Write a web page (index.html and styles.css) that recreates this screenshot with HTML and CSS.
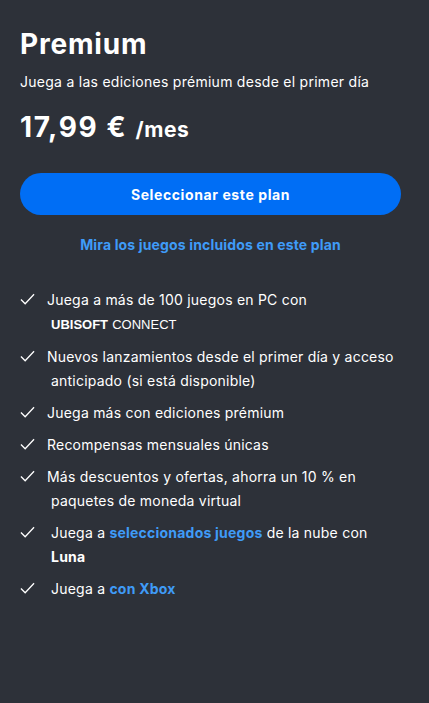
FILE: index.html
```html
<!DOCTYPE html>
<html lang="es">
<head>
    <meta charset="UTF-8">
    <meta name="viewport" content="width=device-width, initial-scale=1.0">
    <title>Premium</title>
    <link rel="stylesheet" href="styles.css">
</head>
<body>
    <div class="plan">
        <h1 class="plan-title">Premium</h1>
        <p class="plan-subtitle">Juega a las ediciones prémium desde el primer día</p>
        <p class="plan-price">17,99 € <span class="per">/mes</span></p>

        <button class="select-btn" type="button">Seleccionar este plan</button>
        <a class="games-link" href="#">Mira los juegos incluidos en este plan</a>

        <ul class="features">
            <li>
                <svg class="check" viewBox="0 0 16 12"><path d="M1 6.5 L5.5 11 L15 1"/></svg>
                <span>Juega a más de 100 juegos en PC con<br><span class="indent"><b class="ubi">UBISOFT</b> <span class="ubi-light">CONNECT</span></span></span>
            </li>
            <li>
                <svg class="check" viewBox="0 0 16 12"><path d="M1 6.5 L5.5 11 L15 1"/></svg>
                <span>Nuevos lanzamientos desde el primer día y acceso<br><span class="indent">anticipado (si está disponible)</span></span>
            </li>
            <li>
                <svg class="check" viewBox="0 0 16 12"><path d="M1 6.5 L5.5 11 L15 1"/></svg>
                <span>Juega más con ediciones prémium</span>
            </li>
            <li>
                <svg class="check" viewBox="0 0 16 12"><path d="M1 6.5 L5.5 11 L15 1"/></svg>
                <span>Recompensas mensuales únicas</span>
            </li>
            <li>
                <svg class="check" viewBox="0 0 16 12"><path d="M1 6.5 L5.5 11 L15 1"/></svg>
                <span>Más descuentos y ofertas, ahorra un 10 % en<br><span class="indent">paquetes de moneda virtual</span></span>
            </li>
            <li class="shifted">
                <svg class="check" viewBox="0 0 16 12"><path d="M1 6.5 L5.5 11 L15 1"/></svg>
                <span>Juega a <a href="#">seleccionados juegos</a> de la nube con<br><b>Luna</b></span>
            </li>
            <li class="shifted">
                <svg class="check" viewBox="0 0 16 12"><path d="M1 6.5 L5.5 11 L15 1"/></svg>
                <span>Juega a <a href="#">con Xbox</a></span>
            </li>
        </ul>
    </div>
</body>
</html>
```

FILE: styles.css
```css
body {
    margin: 0;
    background: #2d3139;
    color: #ffffff;
    font-family: 'Inter', 'Noto Sans', sans-serif;
}
.plan {
    padding: 26px 28px 40px 20px;
    display: flex;
    flex-direction: column;
}
.plan-title {
    margin: 0;
    font-size: 28px;
    font-weight: 700;
    line-height: 36px;
    letter-spacing: 0.8px;
}
.plan-subtitle {
    margin: 10px 0 0;
    font-size: 14px;
    line-height: 20px;
    letter-spacing: 0.27px;
}
.plan-price {
    margin: 18px 0 0;
    font-size: 28px;
    font-weight: 700;
    line-height: 34px;
    letter-spacing: 1.6px;
}
.plan-price .per {
    font-size: 21px;
    letter-spacing: 0.6px;
}
.select-btn {
    margin-top: 26px;
    width: 381px;
    height: 42px;
    border: none;
    border-radius: 21px;
    background: #006ef5;
    color: #ffffff;
    font-family: inherit;
    font-size: 14px;
    font-weight: 700;
    letter-spacing: 0.6px;
    cursor: pointer;
}
.games-link {
    width: 381px;
    margin-top: 20px;
    text-align: center;
    color: #3f9bf7;
    font-size: 14px;
    font-weight: 700;
    line-height: 20px;
    letter-spacing: 0.15px;
    text-decoration: none;
}
.features {
    list-style: none;
    margin: 33px 0 0;
    padding: 0;
    display: flex;
    flex-direction: column;
    gap: 8px;
}
.features li {
    display: flex;
    align-items: flex-start;
    gap: 12px;
    font-size: 14px;
    line-height: 24px;
    letter-spacing: 0.22px;
}
.features li.shifted {
    gap: 16px;
}
.check {
    flex: none;
    width: 15px;
    height: 12px;
    margin-top: 5px;
    fill: none;
    stroke: #ffffff;
    stroke-width: 1.4;
}
.indent {
    padding-left: 4px;
}
.ubi {
    font-family: 'Liberation Sans', sans-serif;
    font-weight: 700;
    font-size: 13px;
    letter-spacing: 0;
}
.ubi-light {
    font-family: 'Liberation Sans', sans-serif;
    font-size: 13px;
    letter-spacing: 0;
}
.features a {
    color: #3f9bf7;
    font-weight: 700;
    text-decoration: none;
}
.features b {
    font-weight: 700;
}
```
